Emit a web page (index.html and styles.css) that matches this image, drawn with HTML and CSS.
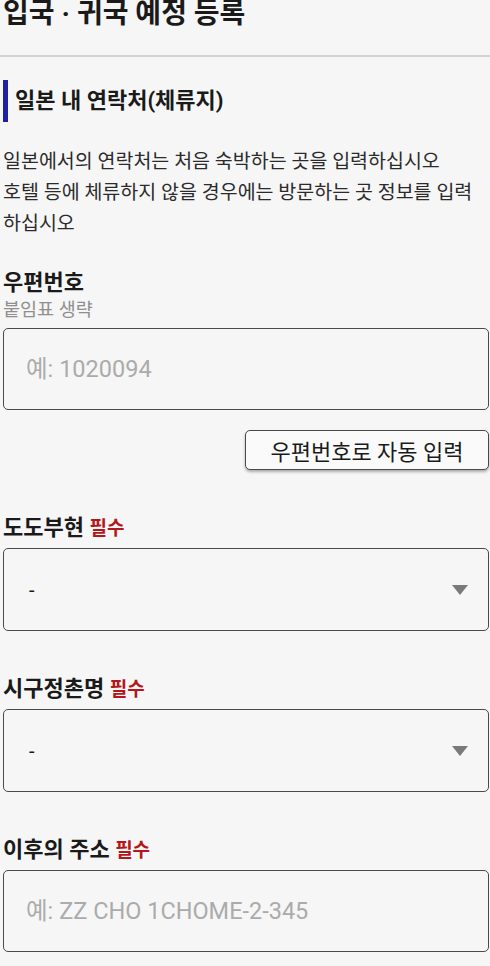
FILE: index.html
```html
<!DOCTYPE html>
<html lang="ko">
<head>
  <meta charset="utf-8">
  <meta name="viewport" content="width=device-width, initial-scale=1">
  <title>입국 · 귀국 예정 등록</title>
  <link rel="stylesheet" href="styles.css">
</head>
<body>
  <header class="page-header">
    <h1 class="page-title">입국 · 귀국 예정 등록</h1>
  </header>
  <main class="form">
    <h2 class="section-title">일본 내 연락처(체류지)</h2>
    <p class="section-desc">일본에서의 연락처는 처음 숙박하는 곳을 입력하십시오<br>호텔 등에 체류하지 않을 경우에는 방문하는 곳 정보를 입력하십시오</p>

    <div class="field field-first">
      <label class="field-label" for="zip">우편번호</label>
      <div class="field-hint">붙임표 생략</div>
      <input class="text-input" id="zip" type="text" placeholder="예: 1020094">
      <div class="btn-row">
        <button class="btn" type="button">우편번호로 자동 입력</button>
      </div>
    </div>

    <div class="field">
      <div class="field-label">도도부현 <span class="required">필수</span></div>
      <div class="select-box">
        <span class="select-value">-</span>
        <svg class="select-arrow" width="16" height="10" viewBox="0 0 16 10"><path d="M0 0h16L8 10z" fill="#7a7a7a"/></svg>
      </div>
    </div>

    <div class="field">
      <div class="field-label">시구정촌명 <span class="required">필수</span></div>
      <div class="select-box">
        <span class="select-value">-</span>
        <svg class="select-arrow" width="16" height="10" viewBox="0 0 16 10"><path d="M0 0h16L8 10z" fill="#7a7a7a"/></svg>
      </div>
    </div>

    <div class="field">
      <label class="field-label" for="addr">이후의 주소 <span class="required">필수</span></label>
      <input class="text-input" id="addr" type="text" placeholder="예: ZZ CHO 1CHOME-2-345">
    </div>
  </main>
</body>
</html>
```

FILE: styles.css
```css
:root {
  --bg: #f6f6f6;
  --text: #1a1a1a;
  --text-body: #2b2b2b;
  --muted: #8f8f8f;
  --placeholder: #ababab;
  --border: #4a4a4a;
  --accent: #1f1fa3;
  --required: #b3161b;
}
*, *::before, *::after {
  box-sizing: border-box;
  margin: 0;
  padding: 0;
}
html, body {
  background: var(--bg);
}
body {
  font-family: Roboto, "Noto Sans CJK KR", sans-serif;
  color: var(--text);
  overflow: hidden;
}
.page-header {
  padding: 0 3px 27px;
  border-bottom: 2px solid #d2d2d2;
}
.page-title {
  font-size: 28px;
  line-height: 28px;
  font-weight: 700;
}
.form {
  padding: 0 1px 0 3px;
}
.section-title {
  margin-top: 23px;
  height: 42px;
  line-height: 42px;
  border-left: 5px solid var(--accent);
  padding-left: 7px;
  font-size: 22px;
  font-weight: 700;
}
.section-desc {
  margin-top: 24px;
  font-size: 19.5px;
  line-height: 31px;
  color: var(--text-body);
}
.field {
  margin-top: 44px;
}
.field-first {
  margin-top: 30px;
}
.field-label {
  display: block;
  font-size: 22px;
  line-height: 28px;
  font-weight: 700;
  margin-bottom: 5px;
}
.field-first .field-label {
  margin-bottom: 1px;
}
.required {
  font-size: 19px;
  color: var(--required);
}
.field-hint {
  font-size: 18.5px;
  line-height: 24px;
  color: var(--muted);
  margin-bottom: 6px;
}
.text-input {
  display: block;
  width: 100%;
  height: 82px;
  border: 1.5px solid var(--border);
  border-radius: 5px;
  background: var(--bg);
  padding: 0 22px;
  font-family: inherit;
  font-size: 23.5px;
  color: var(--text);
  outline: none;
}
.text-input::placeholder {
  color: var(--placeholder);
}
.btn-row {
  display: flex;
  justify-content: flex-end;
  margin-top: 20px;
}
.btn {
  width: 244px;
  height: 40px;
  border: 1.5px solid var(--border);
  border-radius: 5px;
  background: #fafafa;
  box-shadow: 0 2px 3px rgba(0,0,0,0.3);
  font-family: inherit;
  font-size: 22px;
  color: var(--text);
}
.select-box {
  display: flex;
  align-items: center;
  justify-content: space-between;
  height: 83px;
  border: 1.5px solid var(--border);
  border-radius: 5px;
  padding: 0 20px 0 25px;
}
.select-value {
  font-size: 20px;
}
.select-arrow {
  display: block;
}
```
